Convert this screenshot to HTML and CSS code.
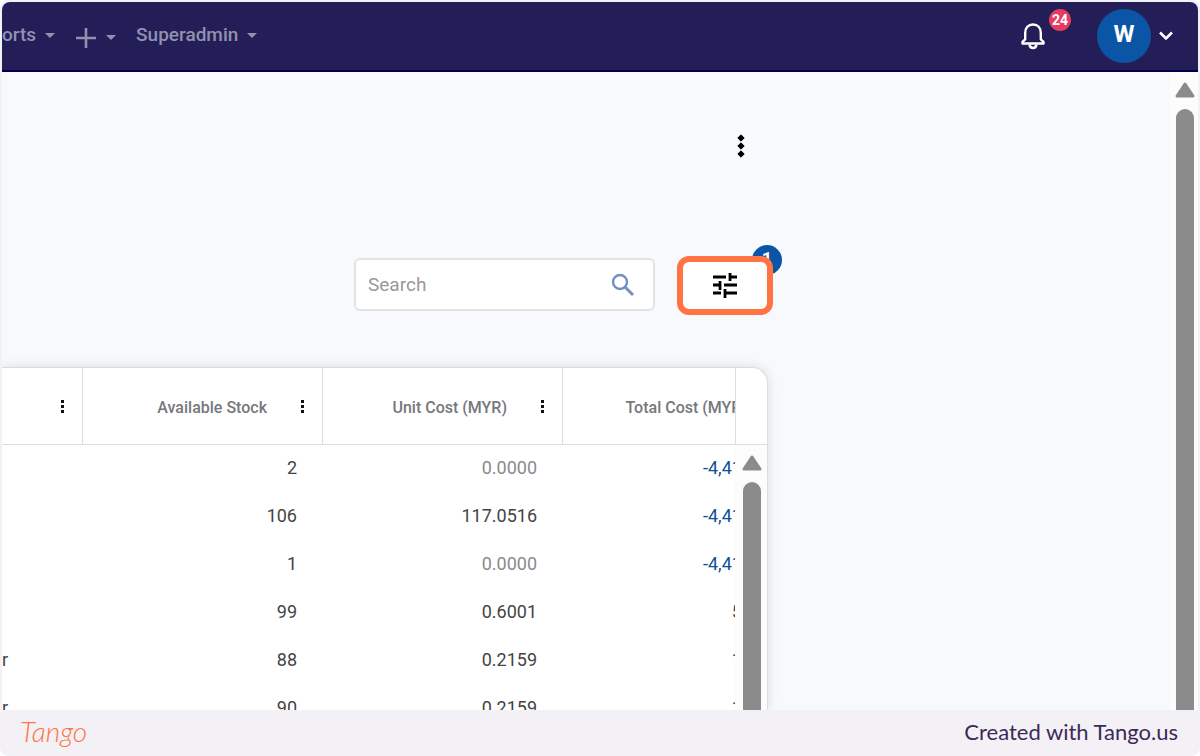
FILE: index.html
```html
<!DOCTYPE html>
<html lang="en">
<head>
    <meta charset="UTF-8">
    <meta name="viewport" content="width=device-width, initial-scale=1.0">
    <title>Inventory</title>
    <link rel="stylesheet" href="styles.css">
</head>
<body>
    <div class="page">
        <div class="app">
            <header class="topbar">
                <nav class="menu">
                    <button type="button" class="menu-item">orts <span class="caret"></span></button>
                    <button type="button" class="menu-item add" aria-label="Add">
                        <svg width="22" height="22" viewBox="0 0 22 22"><path d="M11 1v20M1 11h20" stroke="currentColor" stroke-width="2.6" fill="none"/></svg>
                        <span class="caret"></span>
                    </button>
                    <button type="button" class="menu-item">Superadmin <span class="caret"></span></button>
                </nav>
                <div class="account">
                    <button type="button" class="bell" aria-label="Notifications">
                        <svg width="28" height="30" viewBox="0 0 28 30" fill="none" stroke="#fff" stroke-width="2.4" stroke-linejoin="round">
                            <path d="M3.5 22.5h21v-1.6l-2.7-2.6V12c0-5.2-3-8.5-7.8-8.5S6.2 6.8 6.2 12v6.3l-2.7 2.6z"/>
                            <path d="M10.5 23.5c.3 2.3 1.5 3.5 3.5 3.5s3.2-1.2 3.5-3.5"/>
                        </svg>
                        <span class="bell-count">24</span>
                    </button>
                    <button type="button" class="profile" aria-label="Profile">
                        <span class="avatar">W</span>
                        <svg width="16" height="12" viewBox="0 0 16 12"><path d="M2 2.5l6 6 6-6" stroke="#fff" stroke-width="2.6" fill="none"/></svg>
                    </button>
                </div>
            </header>

            <div class="body">
                <main class="content">
                    <button type="button" class="more" aria-label="More options">
                        <svg width="8" height="24" viewBox="0 0 8 24"><path d="M4 .8L7.200 4 4 7.200.8 4zM4 8.800L7.200 12 4 15.200.8 12zM4 16.800L7.200 20 4 23.200.8 20z" stroke="#000" stroke-linejoin="round"/></svg>
                    </button>

                    <div class="toolbar">
                        <div class="search">
                            <input type="text" placeholder="Search" aria-label="Search">
                            <svg width="24" height="24" viewBox="0 0 24 24" fill="none" stroke="#748fc2" stroke-width="2.4"><circle cx="9" cy="9" r="7"/><path d="M14 14l8 8" stroke-width="3"/></svg>
                        </div>
                        <div class="filter-wrap">
                            <span class="filter-count">1</span>
                            <button type="button" class="filter" aria-label="Filters">
                                <svg width="26" height="26" viewBox="0 0 26 26" fill="none" stroke="#000" stroke-width="2.8">
                                    <path d="M1 4h13M17 4h8M18 0v8"/>
                                    <path d="M1 12h7M12 12h13M8 8v9"/>
                                    <path d="M1 20h8M13 20h12M13 16v9"/>
                                </svg>
                            </button>
                        </div>
                    </div>

                    <div class="panel">
                        <div class="table-wrap">
                            <table>
                                <colgroup>
                                    <col class="col-name">
                                    <col class="col-num">
                                    <col class="col-num">
                                    <col class="col-num">
                                </colgroup>
                                <thead>
                                    <tr>
                                        <th><div class="head"><button type="button" class="dots" aria-label="Column menu"><i></i><i></i><i></i></button></div></th>
                                        <th><div class="head">Available Stock <button type="button" class="dots" aria-label="Column menu"><i></i><i></i><i></i></button></div></th>
                                        <th><div class="head">Unit Cost (MYR) <button type="button" class="dots" aria-label="Column menu"><i></i><i></i><i></i></button></div></th>
                                        <th><div class="head">Total Cost (MYR) <button type="button" class="dots" aria-label="Column menu"><i></i><i></i><i></i></button></div></th>
                                    </tr>
                                </thead>
                                <tbody>
                                    <tr><td></td><td>2</td><td class="zero">0.0000</td><td class="negative">-4,411.00</td></tr>
                                    <tr><td></td><td>106</td><td>117.0516</td><td class="negative">-4,411.00</td></tr>
                                    <tr><td></td><td>1</td><td class="zero">0.0000</td><td class="negative">-4,411.00</td></tr>
                                    <tr><td></td><td>99</td><td>0.6001</td><td>59.41</td></tr>
                                    <tr><td>r</td><td>88</td><td>0.2159</td><td>19.00</td></tr>
                                    <tr><td>r</td><td>90</td><td>0.2159</td><td>19.43</td></tr>
                                </tbody>
                            </table>
                        </div>
                        <div class="panel-side">
                            <div class="panel-corner"></div>
                            <div class="scrollbar">
                                <svg width="20" height="16" viewBox="0 0 20 16"><path d="M10 2L18 14H2z" fill="#8b8b8b" stroke="#8b8b8b" stroke-width="3" stroke-linejoin="round"/></svg>
                                <div class="thumb"></div>
                            </div>
                        </div>
                    </div>
                </main>
                <div class="scrollbar page-scroll">
                    <svg width="20" height="16" viewBox="0 0 20 16"><path d="M10 2L18 14H2z" fill="#8b8b8b" stroke="#8b8b8b" stroke-width="3" stroke-linejoin="round"/></svg>
                    <div class="thumb"></div>
                </div>
            </div>
        </div>

        <footer class="footer">
            <a href="#" class="brand">Tango</a>
            <span class="credit">Created with Tango.us</span>
        </footer>
    </div>
</body>
</html>
```

FILE: styles.css
```css
* {
    box-sizing: border-box;
}
body {
    margin: 0;
    background: #fff;
    font-family: Roboto, sans-serif;
    color: #444;
}
button {
    padding: 0;
    border: none;
    background: none;
    font: inherit;
    color: inherit;
    cursor: pointer;
}
svg {
    display: block;
    flex: none;
}
.page {
    display: flex;
    flex-direction: column;
    height: 100vh;
    padding: 2px 2px 0;
    background: #f3f1f6;
    border-radius: 8px;
    overflow: hidden;
}
.app {
    flex: 1;
    min-height: 0;
    display: flex;
    flex-direction: column;
    border-radius: 8px 8px 0 0;
    overflow: hidden;
    background: #f8f9fd;
}

/* top bar */
.topbar {
    display: flex;
    flex: none;
    justify-content: space-between;
    align-items: center;
    height: 70px;
    padding-right: 24px;
    background: #231e57;
    border-bottom: 2px solid #00004d;
}
.menu {
    display: flex;
    align-items: center;
    gap: 20px;
    padding-bottom: 2px;
    color: #9290b0;
    font-size: 19px;
    font-weight: 500;
    line-height: 24px;
}
.menu-item {
    display: flex;
    align-items: center;
    gap: 9px;
}
.caret {
    border: 5px solid transparent;
    border-top-color: currentColor;
    border-bottom: none;
}
.add {
    padding-top: 5px;
}
.account {
    display: flex;
    align-items: center;
    gap: 50px;
}
.bell {
    position: relative;
}
.bell-count {
    position: absolute;
    top: -12px;
    right: -24px;
    width: 22px;
    height: 22px;
    border-radius: 50%;
    background: #e8395f;
    color: #fff;
    font-size: 14px;
    font-weight: 700;
    line-height: 22px;
    text-align: center;
}
.profile {
    display: flex;
    align-items: center;
    gap: 7px;
}
.avatar {
    width: 54px;
    height: 54px;
    border-radius: 50%;
    background: #0a55a5;
    color: #fff;
    font-size: 24px;
    font-weight: 700;
    line-height: 50px;
    text-align: center;
}

/* page body */
.body {
    flex: 1;
    min-height: 0;
    display: flex;
}
.content {
    flex: 1;
    min-width: 0;
    display: flex;
    flex-direction: column;
    padding: 56px 397px 0 0;
}
.more {
    display: flex;
    flex: none;
    align-self: flex-end;
    align-items: center;
    justify-content: center;
    width: 36px;
    height: 36px;
    margin-right: 14px;
}
.toolbar {
    display: flex;
    align-items: center;
    justify-content: flex-end;
    gap: 22px;
    margin-top: 92px;
}
.search {
    display: flex;
    align-items: center;
    width: 301px;
    height: 53px;
    margin-bottom: 2px;
    padding: 0 18px 0 12px;
    background: #fff;
    border: 2px solid #e2e3e4;
    border-radius: 6px;
}
.search input {
    flex: 1;
    min-width: 0;
    padding: 0;
    border: none;
    outline: none;
    background: none;
    font: 19px Roboto, sans-serif;
}
.search input::placeholder {
    color: #999;
}
.filter-wrap {
    position: relative;
}
.filter-count {
    position: absolute;
    top: -11px;
    right: -9px;
    width: 30px;
    height: 30px;
    border-radius: 50%;
    background: #0a55a5;
    color: #fff;
    font-size: 18px;
    font-weight: 700;
    line-height: 28px;
    text-align: center;
}
.filter {
    position: relative;
    display: flex;
    align-items: center;
    justify-content: center;
    width: 96px;
    height: 59px;
    background: #fff;
    border: 6px solid #ff7442;
    border-radius: 12px;
}

/* stock table */
.panel {
    flex: 1;
    min-height: 0;
    display: flex;
    margin: 52px 5px 0 0;
    background: #fff;
    border: 1px solid #dcdddf;
    border-width: 1px 1px 0 0;
    border-radius: 0 16px 0 0;
    box-shadow: 0 0 12px rgba(0, 0, 0, 0.12);
    overflow: hidden;
}
.table-wrap {
    flex: 1;
    min-width: 0;
    overflow: hidden;
}
table {
    width: 801px;
    table-layout: fixed;
    border-collapse: separate;
    border-spacing: 0;
}
.col-name {
    width: 81px;
}
.col-num {
    width: 240px;
}
th {
    height: 77px;
    padding: 0 16px 0 0;
    border-right: 1px solid #ddd;
    border-bottom: 1px solid #ddd;
    color: #77777c;
    font-size: 16px;
    font-weight: 500;
}
.head {
    display: flex;
    align-items: center;
    justify-content: flex-end;
    gap: 32px;
    padding-top: 3px;
    white-space: nowrap;
}
.dots {
    display: flex;
    flex-direction: column;
    align-items: center;
    gap: 2px;
    width: 7px;
    padding-bottom: 2px;
}
.dots i {
    width: 3px;
    height: 3px;
    background: #111;
}
td {
    height: 48px;
    padding: 0 26px 4px 0;
    font-size: 18px;
    text-align: right;
}
td:first-child {
    padding: 0 0 4px;
    text-align: left;
}
.zero {
    color: #8a8a8e;
}
.negative {
    color: #0f4f96;
}
.panel-side {
    display: flex;
    flex-direction: column;
    width: 32px;
}
.panel-corner {
    flex: none;
    height: 77px;
    border-left: 1px solid #ddd;
    border-bottom: 1px solid #ddd;
}
.scrollbar {
    flex: 1;
    display: flex;
    flex-direction: column;
    align-items: center;
    gap: 11px;
    padding: 10px 0 0 2px;
    background: #fcfcfc;
}
.thumb {
    flex: 1;
    width: 18px;
    border-radius: 9px 9px 0 0;
    background: #8b8b8b;
}
.page-scroll {
    flex: none;
    width: 28px;
}

.footer {
    display: flex;
    flex: none;
    align-items: center;
    justify-content: space-between;
    height: 46px;
    padding: 0 20px 4px 18px;
}
.brand {
    color: #ff7442;
    font-family: Lato, sans-serif;
    font-size: 28px;
    font-style: italic;
    font-weight: 300;
    text-decoration: none;
}
.credit {
    color: #3c2a56;
    font-family: Lato, sans-serif;
    font-size: 22px;
}
```
